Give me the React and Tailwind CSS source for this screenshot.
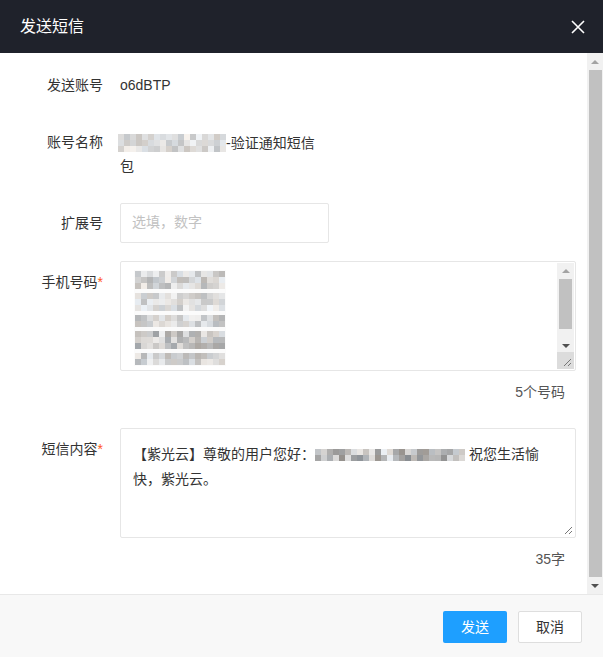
import React from "react";

const font = { fontFamily: '"Liberation Sans", "Noto Sans CJK SC", sans-serif' };

function rnd(seed) {
    let s = seed;
    return () => {
        s = (s * 9301 + 49297) % 233280;
        return s / 233280;
    };
}

// pixelated "blurred" block
function Mosaic({ cols, rows, size = 6, seed = 1, min = 170, max = 235 }) {
    const r = rnd(seed);
    const cells = [];
    for (let i = 0; i < rows * cols; i++) {
        const v = Math.round(min + r() * (max - min));
        const t = Math.round(r() * 10 - 5);
        cells.push(`rgb(${v + t},${v},${v - t})`);
    }
    return (
        <div className="inline-grid align-middle" style={{ gridTemplateColumns: `repeat(${cols}, ${size}px)`, gridAutoRows: `${size}px` }}>
            {cells.map((c, i) => (
                <div key={i} style={{ background: c }} />
            ))}
        </div>
    );
}

function Grip() {
    return (
        <svg className="absolute right-[2px] bottom-[2px]" width="10" height="10" viewBox="0 0 10 10">
            <path d="M9 2 L2 9 M9 6 L6 9" stroke="#777" strokeWidth="1" />
        </svg>
    );
}

function Label({ children, req, className = "" }) {
    return (
        <div className={"w-[103px] shrink-0 text-right text-[14px] leading-[22px] text-[#333] " + className}>
            {children}
            {req && <span className="text-[#ff5722]">*</span>}
        </div>
    );
}

export default function App() {
    return (
        <div className="w-[603px] h-[657px] flex flex-col bg-white overflow-hidden" style={font}>
            <div className="h-[53px] shrink-0 bg-[#1f222b] flex items-center justify-between pl-[20px] pr-[18px]">
                <span className="text-white text-[16px]">发送短信</span>
                <svg width="14" height="14" viewBox="0 0 14 14">
                    <path d="M1 1 L13 13 M13 1 L1 13" stroke="#fff" strokeWidth="1.6" />
                </svg>
            </div>

            <div className="flex-1 flex min-h-0">
                <div className="flex-1 pr-[11px] pt-[21px]">
                    <div className="flex gap-[17px]">
                        <Label>发送账号</Label>
                        <div className="text-[14px] leading-[22px] text-[#333]">o6dBTP</div>
                    </div>

                    <div className="flex gap-[17px] mt-[35px]">
                        <Label className="leading-[23px]">账号名称</Label>
                        <div className="text-[14px] leading-[23px] text-[#333] w-[200px] -ml-[2px]">
                            <Mosaic cols={18} rows={3} size={6} seed={7} min={195} max={245} />
                            <span className="align-middle">-验证通知短信</span>
                            <br />
                            <span className="ml-[2px]">包</span>
                        </div>
                    </div>

                    <div className="flex gap-[17px] mt-[25px] items-center">
                        <Label>扩展号</Label>
                        <div className="w-[209px] h-[40px] border border-[#e6e6e6] rounded-[2px] pl-[11px] flex items-center text-[14px] text-[#c2c2c2]">
                            选填，数字
                        </div>
                    </div>

                    <div className="flex gap-[17px] mt-[18px]">
                        <Label req className="pt-[10px]">手机号码</Label>
                        <div className="flex-1">
                            <div className="relative h-[110px] border border-[#e6e6e6] rounded-[2px]">
                                <div className="absolute left-[13px] top-[8px] flex flex-col gap-[4px] bg-[#fbfbfb] p-[1px]">
                                    <Mosaic cols={15} rows={3} size={6} seed={3} min={180} max={240} />
                                    <Mosaic cols={15} rows={3} size={6} seed={11} min={190} max={245} />
                                    <Mosaic cols={15} rows={2} size={6} seed={21} min={180} max={240} />
                                    <Mosaic cols={15} rows={3} size={6} seed={5} min={160} max={240} />
                                    <Mosaic cols={15} rows={2} size={6} seed={17} min={180} max={240} />
                                </div>
                                <div className="absolute right-[1px] top-[1px] bottom-[1px] w-[17px] bg-[#f1f1f1] flex flex-col items-center">
                                    <div className="h-[16px] flex items-center justify-center">
                                        <div className="w-0 h-0 border-l-[4px] border-r-[4px] border-b-[4px] border-l-transparent border-r-transparent border-b-[#a3a3a3]" />
                                    </div>
                                    <div className="w-[13px] h-[50px] bg-[#c1c1c1]" />
                                    <div className="flex-1 flex items-end justify-center pb-[4px]">
                                        <div className="w-0 h-0 border-l-[4px] border-r-[4px] border-t-[4px] border-l-transparent border-r-transparent border-t-[#505050]" />
                                    </div>
                                    <div className="relative w-[17px] h-[17px] bg-[#dcdcdc]">
                                        <Grip />
                                    </div>
                                </div>
                            </div>
                            <div className="text-right pr-[11px] mt-[11px] text-[14px] leading-[20px] text-[#555]">5个号码</div>
                        </div>
                    </div>

                    <div className="flex gap-[17px] mt-[26px]">
                        <Label req className="pt-[10px]">短信内容</Label>
                        <div className="flex-1">
                            <div className="relative h-[110px] border border-[#e6e6e6] rounded-[2px] pl-[12px] pt-[13px] text-[14px] leading-[25px] text-[#333]">
                                【紫光云】尊敬的用户您好：
                                <Mosaic cols={25} rows={2} size={6} seed={9} min={140} max={240} />
                                {" "}祝您生活愉
                                <br />
                                快，紫光云。
                                <Grip />
                            </div>
                            <div className="text-right pr-[11px] mt-[11px] text-[14px] leading-[20px] text-[#555]">35字</div>
                        </div>
                    </div>
                </div>

                <div className="w-[16px] shrink-0 bg-[#f1f1f1] flex flex-col items-center">
                    <div className="h-[17px] flex items-center justify-center">
                        <div className="w-0 h-0 border-l-[4px] border-r-[4px] border-b-[4px] border-l-transparent border-r-transparent border-b-[#a3a3a3]" />
                    </div>
                    <div className="w-[13px] flex-1 bg-[#c1c1c1]" />
                    <div className="h-[17px] flex items-center justify-center">
                        <div className="w-0 h-0 border-l-[4px] border-r-[4px] border-t-[4px] border-l-transparent border-r-transparent border-t-[#505050]" />
                    </div>
                </div>
            </div>

            <div className="h-[63px] shrink-0 bg-[#f8f8f8] border-t border-[#e8e8e8] flex items-center justify-end gap-[11px] pr-[21px] pt-[2px]">
                <div className="w-[64px] h-[32px] rounded-[2px] bg-[#1e9fff] text-white text-[14px] flex items-center justify-center">发送</div>
                <div className="w-[64px] h-[32px] rounded-[2px] bg-white border border-[#dedede] text-[#333] text-[14px] flex items-center justify-center">取消</div>
            </div>
        </div>
    );
}
